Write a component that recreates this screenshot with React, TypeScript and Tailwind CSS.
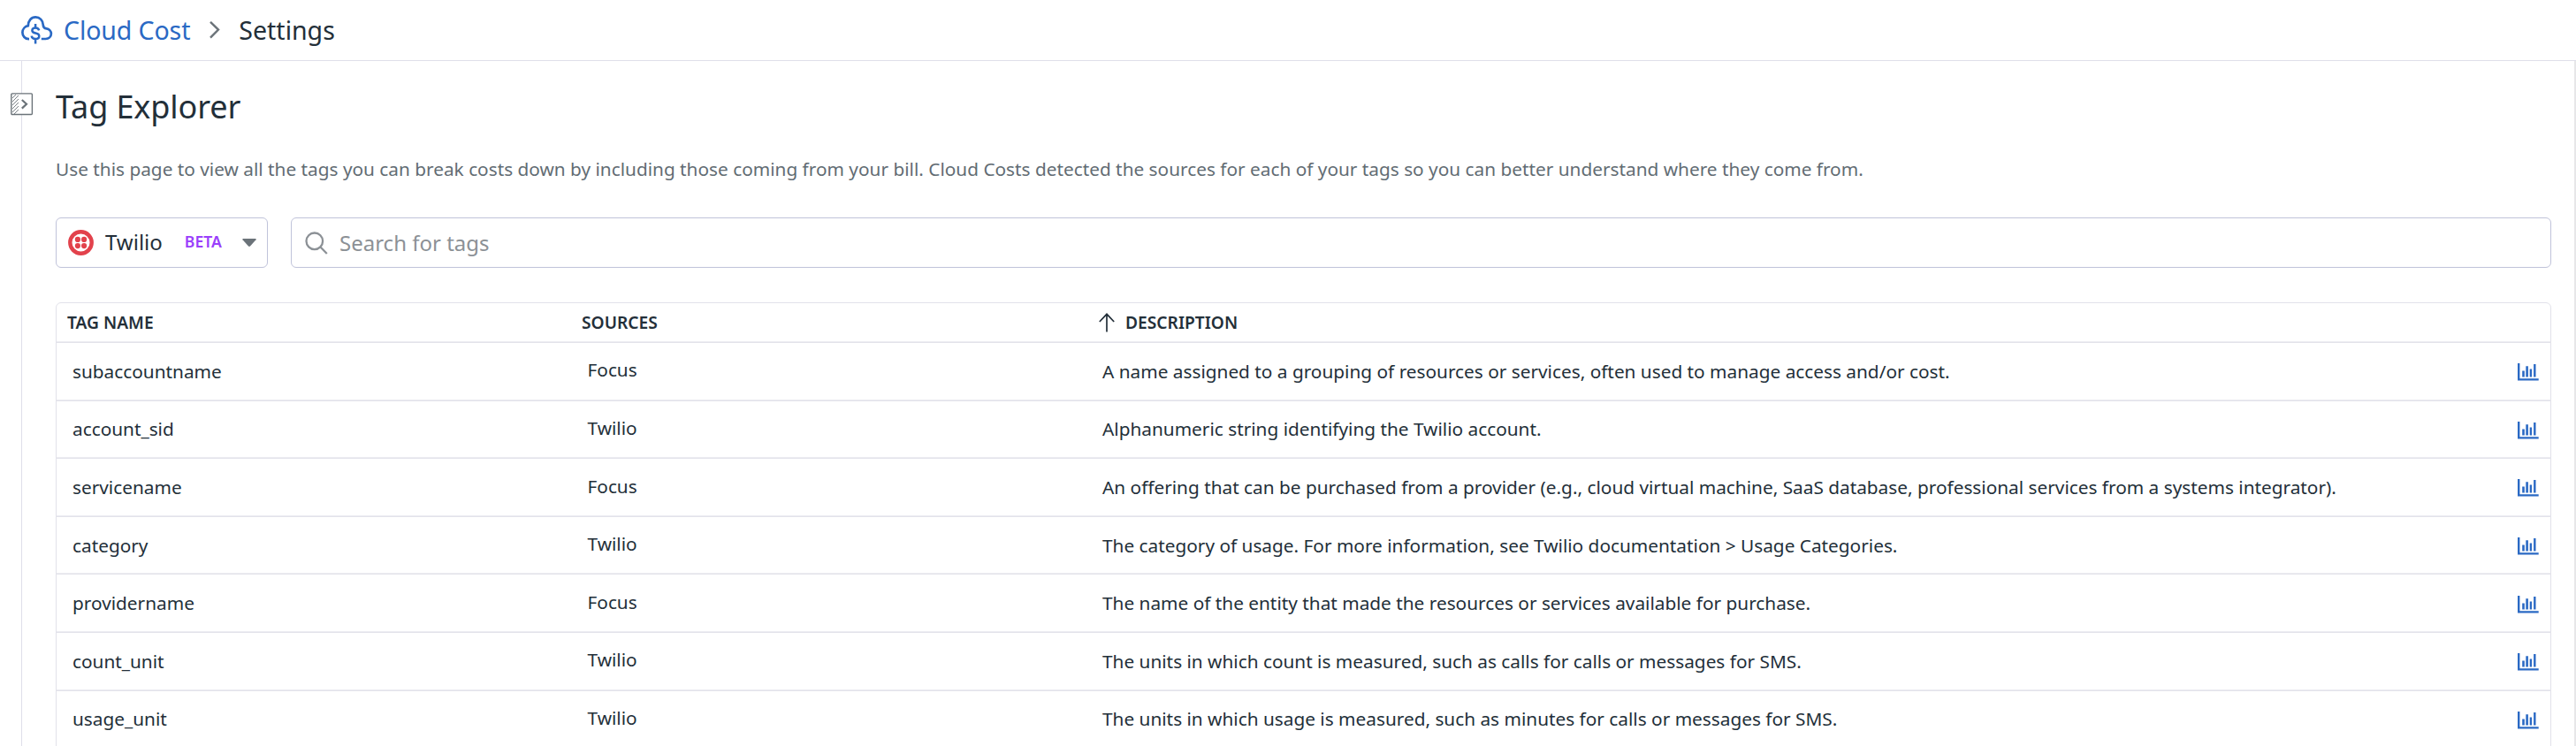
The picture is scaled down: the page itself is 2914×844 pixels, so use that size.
import React from "react";

type Tag = { name: string; source: string; description: string };

const tags: Tag[] = [
  { name: "subaccountname", source: "Focus", description: "A name assigned to a grouping of resources or services, often used to manage access and/or cost." },
  { name: "account_sid", source: "Twilio", description: "Alphanumeric string identifying the Twilio account." },
  { name: "servicename", source: "Focus", description: "An offering that can be purchased from a provider (e.g., cloud virtual machine, SaaS database, professional services from a systems integrator)." },
  { name: "category", source: "Twilio", description: "The category of usage. For more information, see Twilio documentation > Usage Categories." },
  { name: "providername", source: "Focus", description: "The name of the entity that made the resources or services available for purchase." },
  { name: "count_unit", source: "Twilio", description: "The units in which count is measured, such as calls for calls or messages for SMS." },
  { name: "usage_unit", source: "Twilio", description: "The units in which usage is measured, such as minutes for calls or messages for SMS." },
];

function CloudCostIcon() {
  return (
    <svg className="h-8 w-9 shrink-0" viewBox="0 0 36 32" fill="none" stroke="#2a69c4" strokeWidth="2.7">
      <path d="M9 26.1H8.6C4.4 26.1 1.4 22.9 1.4 18.8C1.4 15 4.2 11.9 7.8 11.2C7.9 5.6 11.3 1.4 16.2 1.4C21 1.4 24.6 5 24.8 10.2C24.8 12.6 26 14 28.6 14.3C31.7 14.8 33.9 17.2 33.9 20.1C33.9 23.6 31.2 26 27.6 26H22.8" />
      <path d="M20.2 16.4C19.7 14.4 18.2 13.5 16.1 13.5C13.8 13.5 12.4 14.7 12.4 16.4C12.4 21 20.3 17.9 20.3 22.7C20.3 24.9 18.4 26.1 16.1 26.1C13.7 26.1 12 25 11.7 22.7M16.1 9V14M16.1 25.6V31.4" strokeWidth="2.5" />
    </svg>
  );
}

function ChartIcon() {
  return (
    <svg className="mt-0.5 h-5 w-6" viewBox="0 0 24 20" fill="#2a69c4">
      <path d="M0 0H2.4V17.3H23.7V19.6H0Z" />
      <path d="M5.2 8.4H7.8V15.6H5.2ZM9.3 3.3H11.9V15.6H9.3ZM13.7 6.6H16V15.6H13.7ZM18.1 1H20.5V15.6H18.1Z" />
    </svg>
  );
}

function ExpandIcon() {
  return (
    <svg className="absolute top-9 -left-[13px] h-[26px] w-[26px]" viewBox="0 0 26 26" fill="none" stroke="#6b7379">
      <rect x="0.8" y="0.9" width="23.6" height="23.6" rx="1" fill="#fff" strokeWidth="1.4" />
      <path d="M2 6L6 2M2 10L9 3M2 14L9 7M2 18L9 11M2 22L9 15M4 24L9 19" strokeWidth="0.9" />
      <path d="M12.8 8L18 12.7L12.8 17.6" strokeWidth="2.2" />
    </svg>
  );
}

export default function App() {
  return (
    <div className="flex h-[844px] w-[2914px] flex-col overflow-hidden bg-white font-['Noto_Sans',sans-serif] text-[#232f39]">
      <header className="flex h-[69px] shrink-0 items-center border-b border-[#dfdfea] pl-6 text-[28.5px] leading-none">
        <CloudCostIcon />
        <span className="ml-[12px] text-[#2a69c4] tracking-[-0.1px]">Cloud Cost</span>
        <svg className="mr-[21px] ml-[22px] h-5 w-3" viewBox="0 0 12 20" fill="none" stroke="#6b7379" strokeWidth="2.4">
          <path d="M1 0.8L10 9.6L1 18.6" />
        </svg>
        <span>Settings</span>
      </header>

      <div className="flex min-h-0 flex-1 pl-6">
        <main className="relative flex-1 border-r-2 border-l border-r-[#e7e7e9] border-l-[#dfdfea] pr-[26px] pl-[38px]">
          <ExpandIcon />
          <h1 className="mt-[27px] text-[36px] leading-[50px] tracking-[-0.1px]">Tag Explorer</h1>
          <p className="mt-[31px] text-[20.8px] leading-[28px] text-[#626c73]">
            Use this page to view all the tags you can break costs down by including those coming from your bill. Cloud Costs detected the sources for each of your tags so you can better understand where they come from.
          </p>

          <div className="mt-[41px] flex h-[57px] gap-[26px]">
            <button className="flex w-[240px] items-center rounded-md border border-[#c0c3da] pl-[13px]">
              <svg className="h-[29px] w-[29px]" viewBox="0 0 29 29">
                <circle cx="14.5" cy="14.5" r="12.2" fill="none" stroke="#e2424c" strokeWidth="4.4" />
                <g fill="#e2424c">
                  <circle cx="10.9" cy="10.9" r="3.1" />
                  <circle cx="18.1" cy="10.9" r="3.1" />
                  <circle cx="10.9" cy="18.1" r="3.1" />
                  <circle cx="18.1" cy="18.1" r="3.1" />
                </g>
              </svg>
              <span className="ml-[13px] pb-px text-[24px] leading-none">Twilio</span>
              <span className="ml-[25px] pb-px text-[17.6px] leading-none font-semibold text-[#9a3ffb]">BETA</span>
              <svg className="ml-[23px] h-[10px] w-4" viewBox="0 0 16 10">
                <path d="M1 0H15Q16 0 15.5 1.2L9 8.6Q8 9.5 7 8.6L0.5 1.2Q0 0 1 0Z" fill="#6b7379" />
              </svg>
            </button>
            <div className="flex flex-1 items-center rounded-md border border-[#c0c3da] pl-[15px]">
              <svg className="h-[26px] w-[26px]" viewBox="0 0 26 26" fill="none" stroke="#8c9196" strokeWidth="2.3">
                <circle cx="10.8" cy="10.8" r="9.3" />
                <path d="M17.5 17.5L24.8 25" />
              </svg>
              <span className="ml-[13px] text-[24px] leading-none text-[#8c9196]">Search for tags</span>
            </div>
          </div>

          <section className="mt-[39px] rounded-t-md border border-[#e2e2ea]">
            <div className="grid h-[45px] grid-cols-[582px_585px_1fr] items-center border-b border-[#e2e2ea] pl-3 text-[19.2px] leading-none font-semibold shadow-[inset_0_-1px_0_#ededf2]">
              <span>TAG NAME</span>
              <span>SOURCES</span>
              <span className="flex items-center">
                <svg className="mr-3 h-[22px] w-[18px]" viewBox="0 0 18 22" fill="none" stroke="#232f39" strokeWidth="1.7">
                  <path d="M9 21.5V1.5M0.8 10L9 1.3L17.2 10" />
                </svg>
                DESCRIPTION
              </span>
            </div>
            {tags.map((tag) => (
              <div key={tag.name} className="grid h-[65.6px] grid-cols-[582.5px_582.5px_1fr_auto] items-center border-b border-[#e2e2ea] pr-[13px] pl-[18px] text-[20.8px] leading-none shadow-[inset_0_-1px_0_#ededf2]">
                <span>{tag.name}</span>
                <span className="pb-[3px]">{tag.source}</span>
                <span>{tag.description}</span>
                <ChartIcon />
              </div>
            ))}
          </section>
        </main>
      </div>
    </div>
  );
}
